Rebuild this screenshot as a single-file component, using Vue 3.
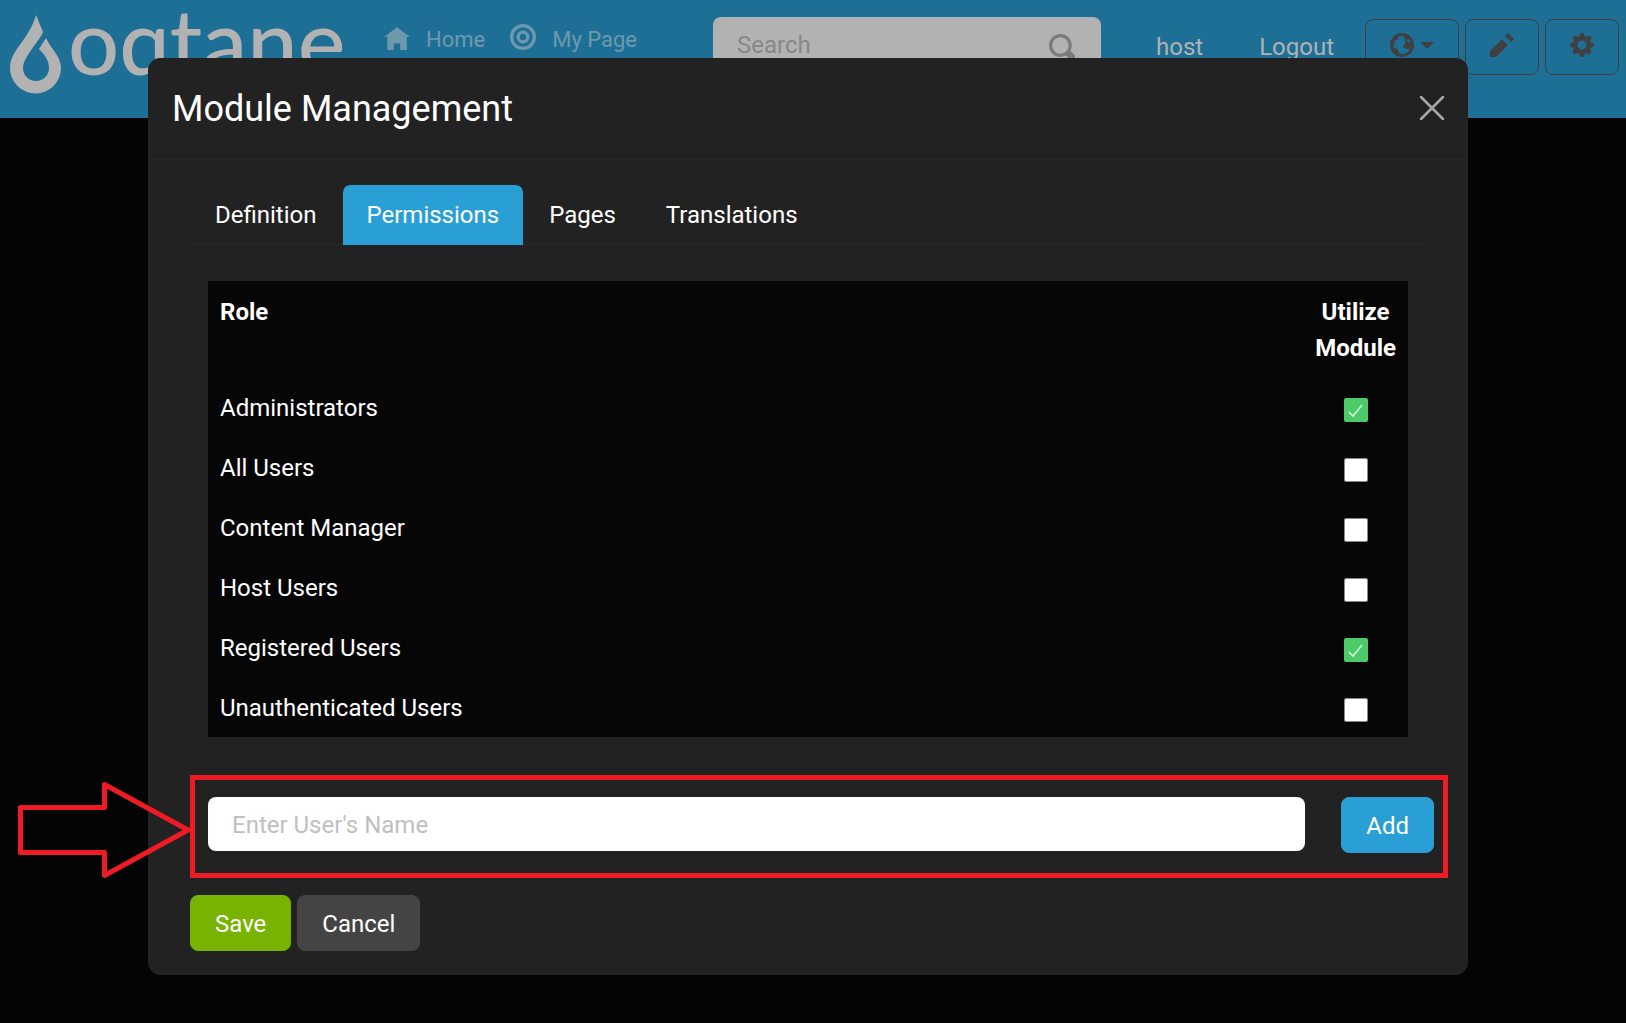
<script setup>
import { ref } from 'vue'

const tabs = ['Definition', 'Permissions', 'Pages', 'Translations']
const activeTab = ref('Permissions')
const search = ref('')
const userName = ref('')

const roles = ref([
  { name: 'Administrators', allowed: true },
  { name: 'All Users', allowed: false },
  { name: 'Content Manager', allowed: false },
  { name: 'Host Users', allowed: false },
  { name: 'Registered Users', allowed: true },
  { name: 'Unauthenticated Users', allowed: false }
])
</script>

<template>
  <div class="page">
    <header class="topbar">
      <a class="logo" href="#" aria-label="oqtane">
        <svg class="drop" viewBox="0 0 52 79" aria-hidden="true">
          <path d="M26 0L33 17C31 24 13 42 13 53A13 13 0 0 0 39 53C39 45 34 39 29 34L36 23C41 34 51 41 51 53A25.5 25.5 0 0 1 0 53C0 35 19 25 26 0Z" />
        </svg>
        <span class="wordmark">oqtane</span>
      </a>
      <nav class="site-nav">
        <a href="#">
          <svg class="icon" viewBox="0 -1 8 8" aria-hidden="true"><path d="M4 0l-4 3h1v4h2v-2h2v2h2v-4.03l1 .03-4-3z" /></svg>
          <span>Home</span>
        </a>
        <a href="#">
          <svg class="icon" viewBox="0 0 8 8" aria-hidden="true">
            <circle class="ring" cx="4" cy="4" r="3.5" />
            <circle class="ring" cx="4" cy="4" r="1.5" />
          </svg>
          <span>My Page</span>
        </a>
      </nav>
      <form class="search" @submit.prevent>
        <input v-model="search" type="text" placeholder="Search" aria-label="Search">
        <button type="submit" aria-label="Submit search">
          <svg viewBox="0 0 8 8" aria-hidden="true"><path d="M3.5 0c-1.93 0-3.5 1.57-3.5 3.5s1.57 3.5 3.5 3.5c.59 0 1.17-.14 1.66-.41a1 1 0 0 0 .13.13l1 1a1.02 1.02 0 1 0 1.44-1.44l-1-1a1 1 0 0 0-.16-.13c.27-.49.44-1.06.44-1.66 0-1.93-1.55-3.5-3.5-3.5zm.02 1c1.39 0 2.5 1.11 2.5 2.5 0 .66-.24 1.27-.66 1.72-.01.01-.02.02-.03.03a1 1 0 0 0-.13.13c-.44.4-1.04.63-1.69.63-1.39 0-2.5-1.11-2.5-2.5s1.11-2.5 2.5-2.5z" /></svg>
        </button>
      </form>
      <div class="account">
        <a href="#">host</a>
        <a href="#">Logout</a>
        <div class="tools">
          <button class="tool wide" type="button" aria-label="Language">
            <svg viewBox="0 0 8 8" aria-hidden="true"><path d="M4 0c-2.2 0-4 1.8-4 4s1.8 4 4 4 4-1.8 4-4-1.8-4-4-4zm0 1c.33 0 .64.09.94.19-.21.2-.45.38-.41.56.04.18.69.13.69.5 0 .27-.42.35-.13.66.35.35-.64.98-.66 1.44-.03.83.84.97 1.53.97.42 0 .53.2.5.44-.54.77-1.46 1.25-2.47 1.25-.38 0-.73-.09-1.06-.22.22-.44-.28-1.31-.75-1.59-.23-.23-.72-.14-1-.25-.09-.27-.18-.54-.19-.84.03-.05.08-.09.16-.09.19 0 .45.38.59.34.18-.04-.74-1.31-.31-1.56.2-.12.6.39.47-.16-.12-.51.36-.28.66-.41.26-.11.45-.41.13-.59-.06-.03-.13-.1-.22-.19.45-.27.97-.44 1.53-.44zm2.31 1.09c.18.22.32.46.44.72 0 .01 0 .02 0 .03-.04.07-.11.11-.22.22-.28.28-.32-.21-.44-.31-.13-.12-.6.02-.66-.13-.07-.18.5-.42.88-.53z" /></svg>
            <span class="caret"></span>
          </button>
          <button class="tool" type="button" aria-label="Edit">
            <svg viewBox="0 0 8 8" aria-hidden="true"><path d="M6 0l-1 1 2 2 1-1-2-2zm-2 2l-4 4v2h2l4-4-2-2z" /></svg>
          </button>
          <button class="tool" type="button" aria-label="Settings">
            <svg viewBox="0 0 8 8" aria-hidden="true"><path d="M3.5 0l-.5 1.19c-.1.03-.19.08-.28.13l-1.19-.5-.72.72.5 1.19c-.05.1-.09.18-.13.28l-1.19.5v1l1.19.5c.04.1.08.18.13.28l-.5 1.19.72.72 1.19-.5c.09.04.18.09.28.13l.5 1.19h1l.5-1.19c.09-.04.19-.08.28-.13l1.19.5.72-.72-.5-1.19c.04-.09.09-.19.13-.28l1.19-.5v-1l-1.19-.5c-.03-.09-.08-.19-.13-.28l.5-1.19-.72-.72-1.19.5c-.09-.04-.19-.09-.28-.13l-.5-1.19h-1zm.5 2.5c.83 0 1.5.67 1.5 1.5s-.67 1.5-1.5 1.5-1.5-.67-1.5-1.5.67-1.5 1.5-1.5z" /></svg>
          </button>
        </div>
      </div>
    </header>

    <div class="modal-layer">
      <section class="modal" role="dialog" aria-labelledby="modal-title">
        <div class="modal-header">
          <h1 id="modal-title">Module Management</h1>
          <button class="close" type="button" aria-label="Close">
            <svg viewBox="0 0 24 24" aria-hidden="true"><path d="M1 1L23 23M23 1L1 23" /></svg>
          </button>
        </div>
        <div class="modal-body">
          <div class="tabs" role="tablist">
            <button
              v-for="tab in tabs"
              :key="tab"
              type="button"
              role="tab"
              class="tab"
              :class="{ active: tab === activeTab }"
              :aria-selected="tab === activeTab"
              @click="activeTab = tab"
            >{{ tab }}</button>
          </div>

          <table class="roles">
            <thead>
              <tr>
                <th scope="col">Role</th>
                <th scope="col" class="check-col">Utilize Module</th>
              </tr>
            </thead>
            <tbody>
              <tr v-for="(role, i) in roles" :key="role.name">
                <td><label :for="'role-' + i">{{ role.name }}</label></td>
                <td class="check-col"><input :id="'role-' + i" v-model="role.allowed" type="checkbox"></td>
              </tr>
            </tbody>
          </table>

          <form class="add-user" @submit.prevent>
            <svg class="arrow" viewBox="0 0 172 97" aria-hidden="true"><path d="M2.5 25.5H86.5V2.5L170 48L86.5 93.5V70.5H2.5Z" /></svg>
            <input v-model="userName" type="text" placeholder="Enter User's Name" aria-label="User's name">
            <button class="btn primary" type="submit">Add</button>
          </form>

          <div class="actions">
            <button class="btn success" type="button">Save</button>
            <button class="btn secondary" type="button">Cancel</button>
          </div>
        </div>
      </section>
    </div>
  </div>
</template>

<style>
body {
  margin: 0;
  background: #040404;
}
</style>

<style scoped>
.page,
.page * {
  box-sizing: border-box;
}

.page {
  position: relative;
  min-height: 100vh;
  background: #040404;
  color: #fff;
  font-family: Roboto, "Liberation Sans", sans-serif;
  font-size: 24px;
  line-height: 36px;
}

button,
input {
  font: inherit;
  color: inherit;
}

button {
  cursor: pointer;
}

svg {
  display: block;
  fill: currentColor;
}

a {
  color: inherit;
  text-decoration: none;
}

.topbar {
  display: flex;
  align-items: flex-start;
  height: 118px;
  padding-right: 7px;
  background: #1d6f96;
  color: #b2b2b2;
}

.logo {
  display: flex;
  flex: none;
  width: 384px;
  padding: 15px 0 0 10px;
  gap: 6px;
}

.drop {
  width: 52px;
  height: 79px;
}

.wordmark {
  font-family: Lato, sans-serif;
  font-size: 90px;
  font-weight: 500;
  line-height: 50px;
}

.site-nav {
  display: flex;
  flex: none;
  width: 329px;
  gap: 25px;
  padding-top: 22px;
  color: #6e99ad;
  font-size: 22px;
}

.site-nav a {
  display: flex;
  gap: 16px;
}

.icon {
  width: 26px;
  height: 26px;
  margin-top: 2px;
}

.ring {
  fill: none;
  stroke: currentColor;
}

.search {
  display: flex;
  flex: 0 1 388px;
  align-items: center;
  height: 54px;
  margin-top: 17px;
  padding: 0 26px 0 24px;
  border-radius: 8px;
  background: #b2b2b2;
}

.search input {
  flex: 1;
  min-width: 0;
  padding: 2px 0 0;
  border: 0;
  outline: 0;
  background: none;
}

.search input::placeholder {
  color: #888;
  opacity: 1;
}

.search button {
  padding: 6px 0 0;
  border: 0;
  background: none;
  color: #7b7b7b;
}

.search svg {
  width: 26px;
  height: 26px;
}

.account {
  display: flex;
  flex: none;
  align-items: center;
  margin-left: auto;
  padding-top: 19px;
}

.account a:first-child {
  margin-right: 56px;
}

.tools {
  display: flex;
  gap: 6px;
  margin-left: 31px;
}

.tool {
  display: flex;
  justify-content: center;
  gap: 6px;
  width: 74px;
  height: 56px;
  padding: 13px 0;
  border: 1px solid #404040;
  border-radius: 8px;
  background: none;
  color: #404040;
}

.tool.wide {
  width: 94px;
}

.tool svg {
  width: 24px;
  height: 24px;
}

.caret {
  margin-top: 9px;
  height: 7px;
  border: 7px solid transparent;
  border-top-color: currentColor;
  border-bottom: 0;
}

.modal-layer {
  position: absolute;
  inset: 0;
  padding: 58px 158px 48px 148px;
}

.modal {
  border: 1px solid #222;
  border-radius: 12px;
  background: #222;
}

.modal-header {
  display: flex;
  align-items: center;
  justify-content: space-between;
  padding: 24px 23px;
  border-bottom: 1px solid #282828;
}

h1 {
  margin: 0;
  font-size: 36px;
  font-weight: 400;
  line-height: 52px;
}

.close {
  padding: 0 0 2px;
  border: 0;
  background: none;
  color: #a7a7a7;
}

.close svg {
  width: 24px;
  height: 24px;
  fill: none;
  stroke: currentColor;
  stroke-width: 2.5;
  stroke-linecap: round;
}

.modal-body {
  padding: 24px 41px 23px;
}

.tabs {
  display: flex;
  box-shadow: inset 0 -1px #282828;
}

.tab {
  padding: 12px 24px;
  border: 1px solid transparent;
  border-bottom: 0;
  border-radius: 8px 8px 0 0;
  background: none;
}

.tab.active {
  border-color: #282828;
  background: #2a9fd6;
  background-clip: padding-box;
}

.roles {
  width: calc(100% - 36px);
  margin: 36px 18px 0;
  border-collapse: collapse;
  background: #060606;
}

.roles th,
.roles td {
  padding: 13px 12px 11px;
  text-align: left;
  vertical-align: top;
}

.roles th {
  font-weight: 700;
}

.roles .check-col {
  width: 104px;
  text-align: center;
}

.roles input {
  appearance: none;
  width: 24px;
  height: 24px;
  margin: 0;
  border: 1px solid #8a8a8a;
  border-radius: 2px;
  background: #fff;
  vertical-align: middle;
}

.roles input:checked {
  border-color: #4ccb68;
  background: #4ccb68 url("data:image/svg+xml,%3Csvg xmlns='http://www.w3.org/2000/svg' viewBox='0 0 22 22'%3E%3Cpath d='M4 13L8 17L17 6' fill='none' stroke='%23d2f2d9' stroke-width='1.7'/%3E%3C/svg%3E") center / 22px no-repeat;
}

.add-user {
  position: relative;
  display: flex;
  align-items: flex-start;
  gap: 36px;
  margin: 38px -22px 17px 0;
  padding: 17px 9px 20px 13px;
  border: 5px solid #ed1c24;
}

.add-user input {
  flex: 1;
  min-width: 0;
  height: 54px;
  padding: 2px 24px 0;
  border: 0;
  border-radius: 8px;
  background: #fff;
  color: #222;
}

.add-user input::placeholder {
  color: #c0c0c0;
  opacity: 1;
}

.arrow {
  position: absolute;
  top: 2px;
  right: calc(100% + 5px);
  width: 172px;
  height: 97px;
  fill: none;
  stroke: #ed1c24;
  stroke-width: 5;
  stroke-linejoin: round;
}

.actions {
  display: flex;
  gap: 6px;
}

.btn {
  padding: 10px 24px 8px;
  border: 1px solid transparent;
  border-radius: 8px;
}

.primary {
  border-color: #2a9fd6;
  background: #2a9fd6;
}

.success {
  border-color: #77b300;
  background: #77b300;
}

.secondary {
  border-color: #444;
  background: #444;
}
</style>
